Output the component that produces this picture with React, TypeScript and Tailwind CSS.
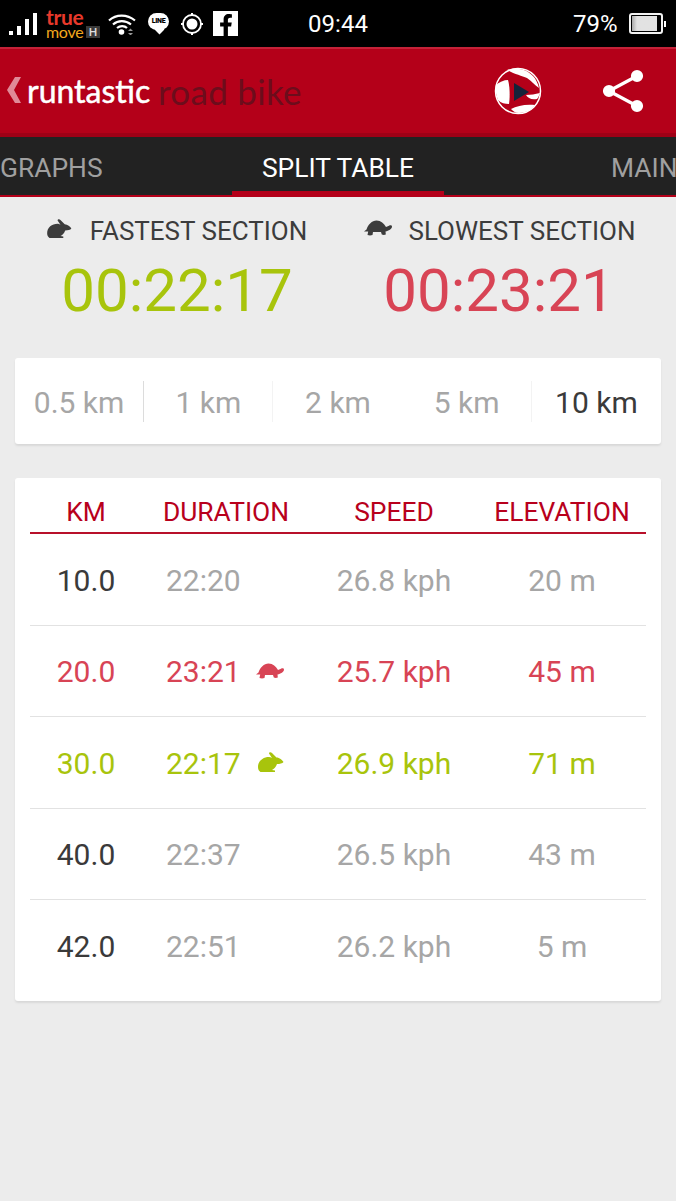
import React from "react";
import { FaFacebookF } from "react-icons/fa";

const Rabbit = ({ className }: { className: string }) => (
  <svg viewBox="0 0 26 20" className={className} fill="currentColor">
    <path d="M0 15C0 9 5 5 11 5c1 0 2 .5 3 1L11 1.500C10.800.2 12.800-.4 14 1l4.500 4.500c3 0 5.800 2.500 7 4.500-1 1.500-3.800 2-6.500 2-1 3-3 5-5 6l3 .5V20H2.500C.8 19 0 17 0 15z" />
  </svg>
);

const Turtle = ({ className }: { className: string }) => (
  <svg viewBox="0 0 28 16" className={className} fill="currentColor">
    <path d="M0 11.500l2.500-2C4 4.500 8 .5 12.500.5c4.500 0 7.500 3 9.500 6.500l3-1.300c1.500-.7 3-.2 3 .8 0 2.500-3.500 4.500-6.500 5l.3 3-2 .5-2-.5-.8-2.500h-8l-.5 3-2.500.5-2.500-.5.700-3.500z" />
  </svg>
);

const Bars = () => (
  <div className="flex items-end gap-[4px] ml-[9px] w-[28px] h-[22px] mt-[1px]">
    <div className="w-[4px] h-[4px] bg-white" />
    <div className="w-[4px] h-[9px] bg-white" />
    <div className="w-[4px] h-[16px] bg-white" />
    <div className="w-[4px] h-[22px] bg-white" />
  </div>
);

const StatusBar = () => (
  <div className="h-[47px] bg-black flex items-center text-white font-['Roboto',sans-serif] shrink-0">
    <Bars />
    <div className="ml-[9px] w-[54px] h-[30px] font-['Lato',sans-serif] leading-none flex flex-col">
      <div className="text-[#e8392b] text-[21px] h-[16px] leading-[15px] font-bold tracking-[-.3px]">true</div>
      <div className="flex items-center h-[14px]">
        <span className="w-[37px] text-[#f2a81d] text-[16px] leading-[14px] font-normal tracking-[-.3px]">move</span>
        <span className="ml-[3px] w-[14px] h-[12px] bg-[#3a3a3a] text-[#ddd] font-bold text-[11px] leading-[12px] text-center">H</span>
      </div>
    </div>
    <svg viewBox="0 0 28 22" className="w-[28px] h-[22px] ml-[8px]" fill="none" stroke="white" strokeWidth="2.200">
      <path d="M1 7.500C8 1 19 1 27 7.500" />
      <path d="M5 11.500c5-4.500 12.500-4.500 18 0" />
      <path d="M9 15c3-2.500 7.500-2.500 10 0" />
      <circle cx="13.500" cy="19" r="2.800" fill="white" stroke="none" />
      <path d="M20 18h5l-2.500-2.500zM20 20h5l-2.500 2.500z" fill="#999" stroke="none" />
    </svg>
    <div className="ml-[12px] relative w-[21px] h-[21px] flex justify-center">
      <div className="w-[21px] h-[17px] rounded-full bg-white flex items-center justify-center text-black text-[7px] font-black leading-none tracking-[-.3px]">LINE</div>
      <div className="absolute left-[8px] bottom-0 w-[7px] h-[7px] bg-white rotate-45 -translate-y-[1px]" />
    </div>
    <svg viewBox="0 0 22 22" className="w-[22px] h-[22px] ml-[12px]">
      <circle cx="11" cy="11" r="9" fill="none" stroke="white" strokeWidth="1.800" />
      <circle cx="11" cy="11" r="5.500" fill="white" />
      <path d="M11 0v2.500M11 19.500V22M0 11h2.500M19.500 11H22" stroke="white" strokeWidth="2" />
    </svg>
    <div className="ml-[10px] w-[25px] h-[25px] bg-white flex items-end justify-end pr-[2px] overflow-hidden">
      <FaFacebookF className="text-black w-[20px] h-[22px]" />
    </div>
    <div className="ml-[70px] text-[24px] w-[60px] text-center leading-none">09:44</div>
    <div className="ml-[205px] text-[24px] leading-none">79%</div>
    <div className="ml-[11px] flex items-center">
      <div className="w-[34px] h-[21px] border-2 border-[#f2f2f2] rounded-[3px] p-px">
        <div className="w-[25px] h-full bg-gradient-to-r from-[#aaa] to-[#e2e2e2] to-20%" />
      </div>
      <div className="w-[2px] h-[6px] bg-white ml-[1px]" />
    </div>
  </div>
);

const Header = () => (
  <div className="h-[90px] bg-[#b40019] border-t-2 border-[#c42238] border-b-4 border-b-[#9e0016] flex items-center shrink-0">
    <svg viewBox="0 0 14 26" className="w-[14px] h-[26px] ml-[7px] mb-[2px]" fill="#e08a98">
      <path d="M8 0h6L7 13l7 13H8L0 13z" />
    </svg>
    <span className="ml-[6px] w-[124px] text-white font-['Lato',sans-serif] font-normal text-[32px] tracking-[0] [-webkit-text-stroke:0.5px_white] leading-none mb-[1px] whitespace-nowrap">runtastic</span>
    <span className="ml-[7px] w-[144px] text-[#6c0d1c] font-['Lato',sans-serif] font-normal text-[35px] leading-none tracking-[.3px] whitespace-nowrap">road bike</span>
    <svg viewBox="0 0 48 48" className="w-[48px] h-[48px] ml-[192px]">
      <circle cx="24" cy="24" r="23.500" fill="#b40019" />
      <circle cx="24" cy="24" r="22.500" fill="none" stroke="white" strokeWidth="1.500" />
      <path d="M13 3c9-3 20-1 26 6 3 3 5 8 6 12-5-3-7-7-12-10-5-2-13-4-20-8z" fill="white" />
      <path d="M2 18c3-3 8-5 12-5 2 7 2 17 1 24-4 0-8-1-11-4-2-5-3-10-2-15z" fill="white" />
      <path d="M32 28c5 0 9-1 14-2-1 3-2 5-3 6-6 1-9-1-11-4z" fill="white" />
      <path d="M17 42c6-3 14-5 24-4-3 5-10 8-16 8-4 0-6-2-8-4z" fill="white" />
      <path d="M20 16l15 9-15 9z" fill="#14233a" />
    </svg>
    <svg viewBox="0 0 44 44" className="w-[44px] h-[44px] ml-[60px]" fill="white" stroke="white" strokeWidth="3.200">
      <path d="M7 22L35 7M7 22l28 15" fill="none" />
      <circle cx="7" cy="22" r="4.500" />
      <circle cx="35" cy="7" r="4.500" />
      <circle cx="35" cy="37" r="4.500" />
    </svg>
  </div>
);

const Tabs = () => (
  <div className="h-[60px] bg-[#222222] border-b-2 border-[#b40019] flex shrink-0 overflow-hidden font-['Roboto',sans-serif] text-[26.400px] whitespace-nowrap">
    <div className="w-[232px] shrink-0 flex items-center text-[#a0a0a0] pt-[6px]">GRAPHS</div>
    <div className="w-[212px] shrink-0 flex items-center justify-center text-white border-b-4 border-[#b40019] pt-[10px]">SPLIT TABLE</div>
    <div className="flex items-center text-[#a0a0a0] pl-[167px] pt-[6px]">MAIN</div>
  </div>
);

const Summary = () => (
  <div className="grid grid-cols-[338px_338px] pt-[17px] font-['Roboto',sans-serif]">
    <div className="flex flex-col items-center pl-[16px]">
      <div className="flex items-center text-[#3c3c3c] text-[26px] leading-[34px]">
        <Rabbit className="w-[25px] h-[19px] mr-[18px] -mt-[6px]" />
        <span>FASTEST SECTION</span>
      </div>
      <div className="text-[#a8c40c] text-[60px] leading-[70px] mt-[8px]">00:22:17</div>
    </div>
    <div className="flex flex-col items-center pr-[14px]">
      <div className="flex items-center text-[#3c3c3c] text-[26px] leading-[34px]">
        <Turtle className="w-[28px] h-[16px] mr-[16px] -mt-[6px]" />
        <span>SLOWEST SECTION</span>
      </div>
      <div className="text-[#d84455] text-[60px] leading-[70px] mt-[8px] -translate-x-[1px]">00:23:21</div>
    </div>
  </div>
);

const Segments = () => {
  const items = [
    { t: "0.5 km", d: "border-r border-[#dcdcdc]", c: "text-[#a6a6a6]" },
    { t: "1 km", d: "border-r border-[#f3f3f3]", c: "text-[#a6a6a6]" },
    { t: "2 km", d: "", c: "text-[#a6a6a6]" },
    { t: "5 km", d: "border-r border-[#f3f3f3]", c: "text-[#a6a6a6]" },
    { t: "10 km", d: "", c: "text-[#3a3a3a]" },
  ];
  return (
    <div className="mx-[15px] mt-[32px] h-[86px] bg-white rounded-[3px] shadow-[0_2px_2px_#d9d9d9] grid grid-cols-5 items-center font-['Roboto',sans-serif] text-[30px]">
      {items.map((i) => (
        <div key={i.t} className={`h-[41px] flex items-center justify-center pt-[2px] ${i.d} ${i.c}`}>{i.t}</div>
      ))}
    </div>
  );
};

type Row = { km: string; dur: string; sp: string; el: string; tone?: "slow" | "fast" };
const rows: Row[] = [
  { km: "10.0", dur: "22:20", sp: "26.8 kph", el: "20 m" },
  { km: "20.0", dur: "23:21", sp: "25.7 kph", el: "45 m", tone: "slow" },
  { km: "30.0", dur: "22:17", sp: "26.9 kph", el: "71 m", tone: "fast" },
  { km: "40.0", dur: "22:37", sp: "26.5 kph", el: "43 m" },
  { km: "42.0", dur: "22:51", sp: "26.2 kph", el: "5 m" },
];

const Table = () => (
  <div className="mx-[15px] mt-[34px] h-[523px] bg-white rounded-[3px] shadow-[0_2px_2px_#d9d9d9] px-[15px] font-['Roboto',sans-serif]">
    <div className="grid grid-cols-[112px_168px_168px_168px] h-[56px] items-end pb-[3px] border-b-2 border-[#b8102a] text-[#b8001c] text-[26.400px] leading-[34px] text-center">
      <div>KM</div>
      <div>DURATION</div>
      <div>SPEED</div>
      <div>ELEVATION</div>
    </div>
    {rows.map((r, i) => {
      const km = r.tone === "slow" ? "text-[#d84455]" : r.tone === "fast" ? "text-[#a8c40c]" : "text-[#3a3a3a]";
      const rest = r.tone === "slow" ? "text-[#d84455]" : r.tone === "fast" ? "text-[#a8c40c]" : "text-[#a6a6a6]";
      return (
        <div key={r.km} className={`grid grid-cols-[112px_168px_168px_168px] h-[91.500px] items-center pt-[2px] text-[30px] text-center ${i < 4 ? "border-b border-[#e2e2e2]" : ""}`}>
          <div className={km}>{r.km}</div>
          <div className={`flex items-center pl-[24px] ${rest}`}>
            <span>{r.dur}</span>
            {r.tone === "slow" && <Turtle className="w-[28px] h-[16px] ml-[15px] -mt-[2px]" />}
            {r.tone === "fast" && <Rabbit className="w-[26px] h-[20px] ml-[17px] -mt-[2px]" />}
          </div>
          <div className={rest}>{r.sp}</div>
          <div className={rest}>{r.el}</div>
        </div>
      );
    })}
  </div>
);

export default function App() {
  return (
    <div className="w-[676px] h-[1201px] bg-[#ececec] flex flex-col overflow-hidden">
      <StatusBar />
      <Header />
      <Tabs />
      <Summary />
      <Segments />
      <Table />
    </div>
  );
}
